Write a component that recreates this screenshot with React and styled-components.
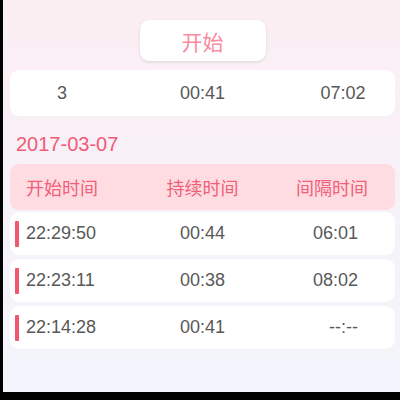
import React from 'react'
import styled, {createGlobalStyle} from 'styled-components'

const GlobalStyle = createGlobalStyle`
  html, body {
    margin: 0;
    padding: 0;
    background: #000;
  }
  body {
    font-family: "Liberation Sans", "Noto Sans CJK SC", sans-serif;
  }
`

const Frame = styled.div`
  width: 400px;
  height: 400px;
  background: #000;
  padding: 0 0 8px 3px;
  box-sizing: border-box;
`

const Screen = styled.div`
  height: 100%;
  overflow: hidden;
  background: linear-gradient(180deg, #fbeef3 0%, #f7f1f7 45%, #f3f5fc 100%);
  padding: 20px 5px 0 7px;
  box-sizing: border-box;
  display: flex;
  flex-direction: column;
`

const StartButton = styled.button`
  align-self: center;
  width: 126px;
  height: 41px;
  border: none;
  border-radius: 9px;
  background: #fff;
  box-shadow: 0 1px 3px rgba(0, 0, 0, 0.12);
  color: #f98a9f;
  font-family: "Noto Sans CJK SC", sans-serif;
  font-size: 21px;
  padding: 0;
`

const Card = styled.div`
  display: grid;
  grid-template-columns: 1fr auto 1fr;
  align-items: center;
  height: ${p => p.$h || 42}px;
  margin-top: ${p => p.$top || 0}px;
  border-radius: 9px;
  background: ${p => p.$bg || '#fff'};
  color: ${p => p.$color || '#585858'};
  font-size: 18px;
`

const Cell = styled.div`
  justify-self: ${p => p.$align || 'center'};
  padding-left: ${p => p.$pl || 0}px;
  padding-right: ${p => p.$pr || 0}px;
  width: ${p => (p.$w ? `${p.$w}px` : 'auto')};
  text-align: center;
`

const Label = styled.span`
  font-family: "Noto Sans CJK SC", sans-serif;
  font-size: 18px;
`

const DateTitle = styled.div`
  margin: 17px 0 0 6px;
  height: 22px;
  line-height: 22px;
  font-size: 20px;
  color: #f25b78;
`

const List = styled.div`
  display: flex;
  flex-direction: column;
  gap: 4px;
  margin-top: 2px;
`

const RowStart = styled.div`
  display: flex;
  align-items: center;
  gap: 7px;
  padding-left: 5px;
`

const Bar = styled.span`
  width: 4px;
  height: 26px;
  background: #f2566f;
  border-radius: 1px;
`

const records = [
  {start: '22:29:50', dur: '00:44', gap: '06:01'},
  {start: '22:23:11', dur: '00:38', gap: '08:02'},
  {start: '22:14:28', dur: '00:41', gap: '--:--'},
]

export default function App() {
  return (
    <>
      <GlobalStyle />
      <Frame>
        <Screen>
          <StartButton>开始</StartButton>
          <Card $h={46} $top={9}>
            <Cell $align="start" $w={104}>3</Cell>
            <Cell>00:41</Cell>
            <Cell $align="end" $w={104}>07:02</Cell>
          </Card>
          <DateTitle>2017-03-07</DateTitle>
          <Card $h={46} $top={9} $bg="#ffdce1" $color="#f15e79">
            <Cell $align="start" $pl={16}><Label>开始时间</Label></Cell>
            <Cell><Label>持续时间</Label></Cell>
            <Cell $align="end" $pr={27}><Label>间隔时间</Label></Cell>
          </Card>
          <List>
            {records.map(r => (
              <Card key={r.start} $h={43}>
                <Cell $align="start">
                  <RowStart>
                    <Bar />
                    {r.start}
                  </RowStart>
                </Cell>
                <Cell>{r.dur}</Cell>
                <Cell $align="end" $pr={37}>{r.gap}</Cell>
              </Card>
            ))}
          </List>
        </Screen>
      </Frame>
    </>
  )
}
